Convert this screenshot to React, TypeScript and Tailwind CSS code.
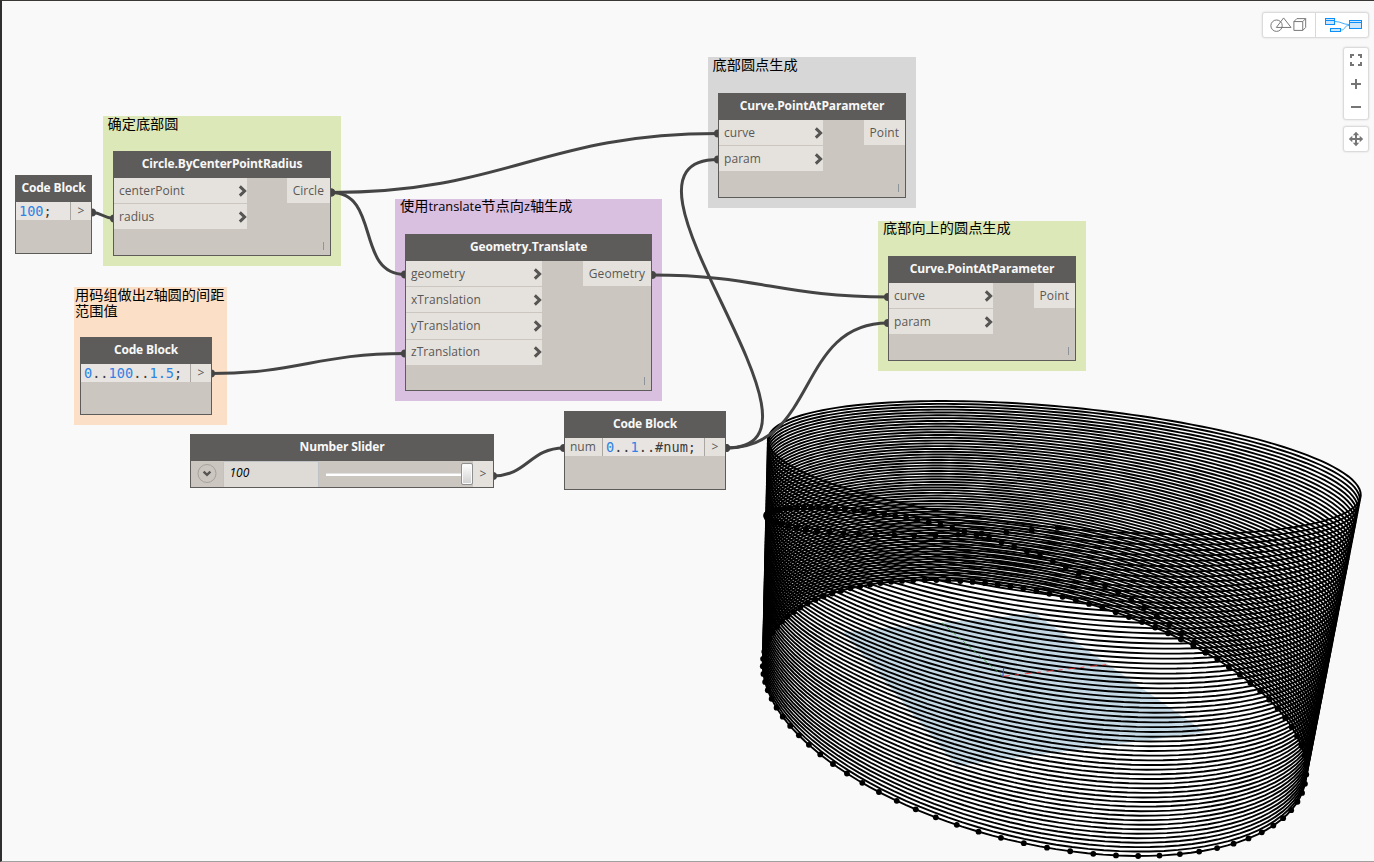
import React from "react";

/* ---------- 3D preview ---------- */

const CAMERA = { f: 772.024, pitch: 0.21526, yaw: -0.19635, depth: 322.933, tx: 131.511, ty: -102.728, cx: 688.5, cy: 430.7 };
const PHASE = 0.00665;

function project(x: number, y: number, z: number): [number, number] {
  const c = CAMERA;
  const right = Math.cos(c.yaw) * x + Math.sin(c.yaw) * y;
  const ahead = -Math.sin(c.yaw) * x + Math.cos(c.yaw) * y;
  const d = ahead * Math.cos(c.pitch) - z * Math.sin(c.pitch) + c.depth;
  const up = ahead * Math.sin(c.pitch) + z * Math.cos(c.pitch);
  return [c.cx + (c.f * (right + c.tx)) / d, c.cy - (c.f * (up + c.ty)) / d];
}

const onCircle = (t: number, z: number) => {
  const a = t * 2 * Math.PI + PHASE;
  return project(100 * Math.cos(a), 100 * Math.sin(a), z);
};

const toPath = (pts: [number, number][]) => "M" + pts.map((p) => p[0].toFixed(2) + " " + p[1].toFixed(2)).join("L");

const rings = Array.from({ length: 67 }, (_, i) => toPath(Array.from({ length: 144 }, (_, k) => onCircle(k / 144, i * 1.5))) + "Z");
const baseDots = Array.from({ length: 100 }, (_, i) => onCircle(i / 99, 0));
const risingDots = Array.from({ length: 67 }, (_, i) => onCircle(i / 99, i * 1.5));
const gridPlane = toPath([project(50, 50, 0), project(-50, 50, 0), project(-50, -50, 0), project(50, -50, 0)]) + "Z";
const gridLines = Array.from({ length: 101 }, (_, i) => i - 50)
  .map((v) => toPath([project(v, -50, 0), project(v, 50, 0)]) + toPath([project(-50, v, 0), project(50, v, 0)]))
  .join("");
const axis = (x: number, y: number, z: number) => toPath([project(0, 0, 0), project(x, y, z)]);

function Preview() {
  return (
    <svg className="absolute inset-0" width="1374" height="862" fill="none">
      <g fill="#ffffff">
        {rings.map((d, i) => (
          <path key={i} d={d} />
        ))}
      </g>
      <path d={gridPlane} fill="#cbdfeb" />
      <path d={gridLines} stroke="#a9c0cf" strokeWidth="0.4" strokeOpacity="0.35" />
      <g stroke="#000000" strokeWidth="1.9">
        {rings.map((d, i) => (
          <path key={i} d={d} />
        ))}
      </g>
      <path d={axis(50, 0, 0)} stroke="#ff3030" strokeWidth="0.8" strokeDasharray="7 5 4 6" />
      <path d={axis(0, 50, 0)} stroke="#35a035" strokeWidth="0.8" strokeDasharray="4 3" />
      <path d={axis(0, 0, 4)} stroke="#4040ff" strokeWidth="1" />
      <g fill="#000000">
        {[...baseDots, ...risingDots].map((p, i) => (
          <circle key={i} cx={p[0]} cy={p[1]} r="2.9" />
        ))}
      </g>
    </svg>
  );
}

/* ---------- wires ---------- */

const WIRES: [number, number, number, number][] = [
  [92, 212.5, 114, 218.5],
  [331, 192.5, 718, 133.5],
  [331, 192.5, 405, 274.5],
  [211, 373.5, 405, 353.5],
  [652, 275, 888, 297],
  [493, 476, 564, 448],
  [726, 448, 718, 159.5],
  [726, 448, 888, 323],
];

function Wires() {
  return (
    <svg className="absolute inset-0" width="1374" height="862" fill="none">
      {WIRES.map(([x1, y1, x2, y2], i) => {
        const o = Math.hypot(x2 - x1, y2 - y1) * 0.45;
        return (
          <g key={i}>
            <path d={`M${x1} ${y1}C${x1 + o} ${y1} ${x2 - o} ${y2} ${x2} ${y2}`} stroke="#444444" strokeWidth="3" />
            <circle cx={x1} cy={y1} r="4" fill="#444444" />
            <circle cx={x2} cy={y2} r="4" fill="#444444" />
          </g>
        );
      })}
    </svg>
  );
}

/* ---------- nodes ---------- */

function Group({ place, label, className }: { place: string; label: React.ReactNode; className?: string }) {
  return (
    <div className={`absolute ${place}`}>
      <div className={`text-[14.2px] whitespace-nowrap text-black ${className ?? "pl-[4.5px] leading-[15px]"}`}>{label}</div>
    </div>
  );
}

function Node({ place, title, children }: { place: string; title: string; children: React.ReactNode }) {
  return (
    <div className={`absolute flex flex-col border border-[#5e5c5a] bg-[#cbc6bf] ${place}`}>
      <div className="flex h-[26px] shrink-0 justify-center bg-[#5e5c5a] text-[12px] leading-[23px] font-bold tracking-[-0.14px] whitespace-nowrap text-[#f8f8f8]">
        {title}
      </div>
      {children}
    </div>
  );
}

function Chevron() {
  return (
    <svg width="9" height="12" viewBox="0 0 9 12" fill="none">
      <path d="M1.8 1.4L6.6 6L1.8 10.6" stroke="#575553" strokeWidth="3" />
    </svg>
  );
}

function FunctionNode({ place, title, inputs, output, inputWidth }: { place: string; title: string; inputs: string[]; output: string; inputWidth: string }) {
  return (
    <Node place={place} title={title}>
      <div className="flex items-start justify-between">
        <div className={`flex flex-col gap-px ${inputWidth}`}>
          {inputs.map((name) => (
            <div key={name} className="flex h-[25.2px] items-center justify-between bg-[#e5e2dd] pl-[5px] text-[12px] text-[#5a5856]">
              <span className="tracking-[0.06px]">{name}</span>
              <Chevron />
            </div>
          ))}
        </div>
        <div className="flex h-[25.2px] items-center bg-[#e5e2dd] px-[6px] text-[12px] tracking-[0.06px] text-[#5a5856]">{output}</div>
      </div>
      <div className="mt-auto flex justify-end pr-[6px] pb-[5px]">
        <div className="h-[8px] w-[1.5px] bg-[#8d949a]" />
      </div>
    </Node>
  );
}

const Num = ({ children }: { children: React.ReactNode }) => <span className="text-[#2f83e4]">{children}</span>;

function CodeNode({ place, input, children }: { place: string; input?: string; children: React.ReactNode }) {
  return (
    <Node place={place} title="Code Block">
      <div className="flex items-start">
        {input && (
          <div className="flex h-[18px] w-[38px] items-center border-r border-[#aaa6a1] bg-[#e5e2dd] pl-[5px] text-[12px] text-[#5a5856]">{input}</div>
        )}
        <div className="h-[18px] flex-1 bg-[#e8e4e1] pl-[3px] font-['DejaVu_Sans_Mono',monospace] text-[13.6px] leading-[19px] whitespace-pre text-[#3c3c3c]">
          {children}
        </div>
        <div className="flex h-[18px] w-[21px] items-center justify-center border-l border-[#aaa6a1] bg-[#e5e2dd] text-[12px] text-[#5a5856]">&gt;</div>
      </div>
    </Node>
  );
}

function SliderNode() {
  return (
    <Node place="left-[190px] top-[434px] w-[304px] h-[54px]" title="Number Slider">
      <div className="flex flex-1 items-stretch">
        <div className="flex w-[31.5px] items-center justify-center">
          <svg width="20" height="20" viewBox="0 0 20 20" fill="none">
            <circle cx="10" cy="9.5" r="9" stroke="#a6a29d" />
            <path d="M6.6 7.6L10 10.8L13.4 7.6" stroke="#575553" strokeWidth="2.4" />
          </svg>
        </div>
        <div className="w-[96.5px] rounded-t-[2px] border-t border-r border-l border-[#bfc3c8] bg-[#dedbd6] pl-[6px] text-[12px] leading-[22px] text-black italic">100</div>
        <div className="flex flex-1 items-center pl-[7px]">
          <div className="h-[3px] flex-1 border-t border-[#e0e0e0] bg-white" />
          <div className="h-[22px] w-[12px] rounded-[2px] border border-[#8e8f8f] bg-linear-to-b from-white to-[#d0d0d0] shadow-[inset_0_0_0_1px_#fafafa]" />
        </div>
        <div className="flex w-[20px] items-center justify-center bg-[#e5e2dd] text-[12px] text-[#5a5856]">&gt;</div>
      </div>
    </Node>
  );
}

/* ---------- canvas controls ---------- */

const panel = "rounded-[2px] bg-white shadow-[0_0_2px_1px_rgba(0,0,0,0.16)]";

function Controls() {
  return (
    <div className="absolute top-[13px] right-[6px] flex flex-col items-end">
      <div className={`flex h-[24px] w-[105px] ${panel}`}>
        <svg width="53" height="24" viewBox="0 0 53 24" fill="none" stroke="#757575" className="border-r border-[#d8d8d8]">
          <circle cx="13.8" cy="12.7" r="5.8" />
          <path d="M21 4.8L13.6 14.5H28.6Z" />
          <path d="M31.5 8.5H40.5V17.5H31.5ZM31.5 8.5L34.5 5.5H43.5L40.5 8.5M43.5 5.5V14.5L40.5 17.5" />
        </svg>
        <svg width="52" height="24" viewBox="0 0 52 24" fill="#cce6fc" stroke="#0a90fb">
          <path d="M19 8.5C25 8.5 27 11.5 33 11.5M25 17C30 17 27.5 12.5 33 12.5" fill="none" stroke="#46adfb" />
          <rect x="9.5" y="5.5" width="9" height="6" />
          <path d="M9.5 7.5H18.5" />
          <rect x="14.5" y="15.5" width="10" height="3" />
          <rect x="33.5" y="7.5" width="12" height="8" />
          <path d="M33.5 9.5H45.5" />
        </svg>
      </div>
      <div className={`mt-[11px] flex h-[71px] w-[24px] flex-col items-center ${panel}`}>
        <svg width="24" height="71" viewBox="0 0 24 71" fill="none" stroke="#767676" strokeWidth="2">
          <path d="M10 7H7V10M14 7H17V10M10 17H7V14M14 17H17V14" />
          <path d="M12 31V41M7 36H17" />
          <path d="M7 59H17" />
        </svg>
      </div>
      <div className={`mt-[8px] flex h-[24px] w-[24px] ${panel}`}>
        <svg width="24" height="24" viewBox="0 0 24 24" fill="#767676">
          <path d="M12 4.8L15.2 8.3H13V11H15.7V8.8L19.2 12L15.7 15.2V13H13V15.7H15.2L12 19.2L8.8 15.7H11V13H8.3V15.2L4.8 12L8.3 8.8V11H11V8.3H8.8Z" />
        </svg>
      </div>
    </div>
  );
}

export default function App() {
  return (
    <div className="relative h-[862px] w-[1374px] overflow-hidden border-t border-b border-l-2 border-t-[#3a3836] border-b-[#a0a0a0] border-l-[#2f2f2f] bg-[#f9f9f9] font-['Open_Sans','Noto_Sans_CJK_SC',sans-serif]">
      <div className="absolute -top-px -left-[2px] h-[862px] w-[1374px]">
        <Preview />
        <Group place="left-[103px] top-[116px] w-[238px] h-[150px] bg-[#dce8b8]" label="确定底部圆" />
        <Group
          place="left-[395px] top-[199px] w-[267px] h-[202px] bg-[#d9bfe0]"
          className="pl-[5px] leading-[14px]"
          label={
            <>
              使用<span className="text-[12.8px]">translate</span>节点向<span className="text-[12.8px]">z</span>轴生成
            </>
          }
        />
        <Group place="left-[708px] top-[57px] w-[208px] h-[151px] bg-[#d7d7d7]" label="底部圆点生成" />
        <Group place="left-[878px] top-[221px] w-[208px] h-[150px] bg-[#dce8b8]" label="底部向上的圆点生成" className="pl-[5px] leading-[14px]" />
        <Group
          place="left-[74px] top-[287px] w-[153px] h-[138px] bg-[#fcdfc7]"
          className="pl-[1px] leading-4"
          label={
            <>
              用码组做出<span className="text-[13px]">Z</span>轴圆的间距
              <br />
              范围值
            </>
          }
        />
        <Wires />
        <FunctionNode place="left-[113px] top-[151px] w-[218px] h-[105px]" title="Circle.ByCenterPointRadius" inputs={["centerPoint", "radius"]} output="Circle" inputWidth="w-[133px]" />
        <FunctionNode
          place="left-[405px] top-[234px] w-[247px] h-[157px]"
          title="Geometry.Translate"
          inputs={["geometry", "xTranslation", "yTranslation", "zTranslation"]}
          output="Geometry"
          inputWidth="w-[136px]"
        />
        <FunctionNode place="left-[718px] top-[93px] w-[188px] h-[105px]" title="Curve.PointAtParameter" inputs={["curve", "param"]} output="Point" inputWidth="w-[104px]" />
        <FunctionNode place="left-[888px] top-[256px] w-[188px] h-[105px]" title="Curve.PointAtParameter" inputs={["curve", "param"]} output="Point" inputWidth="w-[104px]" />
        <CodeNode place="left-[15px] top-[175px] w-[77px] h-[79px]">
          <Num>100</Num>;
        </CodeNode>
        <CodeNode place="left-[80px] top-[337px] w-[132px] h-[78px]">
          <Num>0</Num>..<Num>100</Num>..<Num>1.5</Num>;
        </CodeNode>
        <CodeNode place="left-[564px] top-[411px] w-[162px] h-[79px]" input="num">
          <Num>0</Num>..<Num>1</Num>..#num;
        </CodeNode>
        <SliderNode />
        <Controls />
      </div>
    </div>
  );
}
